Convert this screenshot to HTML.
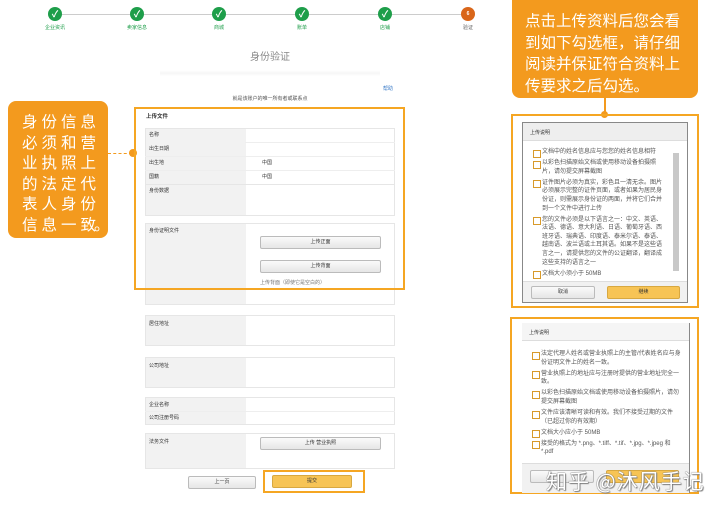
<!DOCTYPE html>
<html><head><meta charset="utf-8"><style>
*{margin:0;padding:0;box-sizing:border-box}
body{width:720px;height:512px;background:#fff;position:relative;overflow:hidden;font-family:"Liberation Sans","Noto Sans CJK SC",sans-serif;color:#333}
.a{position:absolute}
.ck{position:absolute;width:14px;height:14px;border-radius:50%;background:#1e9e4a;color:#fff;font-size:9px;line-height:14px;text-align:center;font-weight:bold}
.sl{position:absolute;font-size:5px;color:#1e9e4a;width:40px;text-align:center}
.row{position:absolute;left:145px;width:250px;border:1px solid #e6e6e6;background:linear-gradient(90deg,#f2f2f2 0,#f2f2f2 100px,#fff 100px)}
.lb{position:absolute;left:4px;font-size:5px;color:#333}
.btn{position:absolute;height:13px;border:1px solid #bbb;border-radius:2px;background:linear-gradient(#fafafa,#e6e6e6);font-size:5px;text-align:center;line-height:11px;color:#333}
.ob{position:absolute;border:2px solid #f5a623}
.it{font-size:6px;color:#555;line-height:8.6px;margin-bottom:2.5px;padding-left:9px;position:relative}
.it:before{content:"";position:absolute;left:0;top:1.5px;width:6px;height:6px;border:1px solid #d89a2a}
</style></head><body>
<div class="a" style="left:55px;top:14px;width:420px;height:1px;background:#ccc"></div>
<div class="ck" style="left:48px;top:7px">✓</div><div class="sl" style="left:35px;top:24px">企业资讯</div>
<div class="ck" style="left:130px;top:7px">✓</div><div class="sl" style="left:117px;top:24px">卖家信息</div>
<div class="ck" style="left:212px;top:7px">✓</div><div class="sl" style="left:199px;top:24px">商城</div>
<div class="ck" style="left:295px;top:7px">✓</div><div class="sl" style="left:282px;top:24px">账单</div>
<div class="ck" style="left:378px;top:7px">✓</div><div class="sl" style="left:365px;top:24px">店铺</div>
<div class="ck" style="left:461px;top:7px;background:#d9661a;font-size:5px">6</div><div class="sl" style="left:448px;top:24px;color:#666">验证</div>
<div class="a" style="left:240px;top:48px;width:60px;text-align:center;font-size:10px;color:#888">身份验证</div>
<div class="a" style="left:160px;top:70px;width:220px;height:6px;background:linear-gradient(#fff,#f6f6f6,#fff)"></div>
<div class="a" style="left:383px;top:85px;font-size:5px;color:#3a7bc8">帮助</div>
<div class="a" style="left:200px;top:95px;width:140px;text-align:center;font-size:5px;color:#555">就是该账户的唯一所有者或联系点</div>

<div class="a" style="left:8px;top:101px;width:100px;height:137px;background:#f39a1e;border-radius:8px;color:#fff;font-size:15.5px;line-height:20.5px;padding:10px 0 0 14px;letter-spacing:4px;white-space:nowrap;font-family:'Noto Sans CJK SC',sans-serif">身份信息<br>必须和营<br>业执照上<br>的法定代<br>表人身份<br>信息一致<span style="letter-spacing:0;margin-left:-6px">。</span></div>
<div class="a" style="left:108px;top:153px;width:24px;border-top:1.5px dashed #f39a1e"></div>
<div class="a" style="left:129px;top:149px;width:8px;height:8px;border-radius:50%;background:#f39a1e"></div>

<div class="a" style="left:146px;top:112px;font-size:5.5px;font-weight:bold">上传文件</div>
<div class="row" style="top:128px;height:58px"></div>
<div class="lb" style="left:149px;top:131px;position:absolute">名称</div>
<div class="a" style="left:245px;top:142px;width:150px;border-top:1px solid #eee"></div>
<div class="lb" style="left:149px;top:145px;position:absolute">出生日期</div>
<div class="a" style="left:145px;top:156px;width:250px;border-top:1px solid #eee"></div>
<div class="lb" style="left:149px;top:159px;position:absolute">出生地</div><div class="lb" style="left:262px;top:159px;position:absolute">中国</div>
<div class="a" style="left:145px;top:170px;width:250px;border-top:1px solid #eee"></div>
<div class="lb" style="left:149px;top:173px;position:absolute">国籍</div><div class="lb" style="left:262px;top:173px;position:absolute">中国</div>
<div class="a" style="left:145px;top:184px;width:250px;border-top:1px solid #eee"></div>
<div class="row" style="top:184px;height:32px"></div>
<div class="lb" style="left:149px;top:187px;position:absolute">身份数据</div>
<div class="row" style="top:223px;height:82px"></div>
<div class="lb" style="left:149px;top:227px;position:absolute">身份证明文件</div>
<div class="btn" style="left:260px;top:236px;width:121px">上传正面</div>
<div class="btn" style="left:260px;top:260px;width:121px">上传背面</div>
<div class="a" style="left:260px;top:279px;font-size:5px;color:#777">上传背面（即使它是空白的）</div>
<div class="ob" style="left:134px;top:107px;width:271px;height:183px"></div>

<div class="row" style="top:315px;height:31px"></div><div class="lb" style="left:149px;top:320px;position:absolute">居住地址</div>
<div class="row" style="top:357px;height:31px"></div><div class="lb" style="left:149px;top:362px;position:absolute">公司地址</div>
<div class="row" style="top:397px;height:28px"></div>
<div class="a" style="left:145px;top:411px;width:250px;border-top:1px solid #eee"></div>
<div class="lb" style="left:149px;top:401px;position:absolute">企业名称</div><div class="lb" style="left:149px;top:414px;position:absolute">公司注册号码</div>
<div class="row" style="top:433px;height:36px"></div><div class="lb" style="left:149px;top:438px;position:absolute">法务文件</div>
<div class="btn" style="left:260px;top:437px;width:121px">上传 营业执照</div>
<div class="btn" style="left:188px;top:476px;width:68px">上一页</div>
<div class="btn" style="left:272px;top:475px;width:80px;background:#f7c455;border-color:#d8a840">提交</div>
<div class="ob" style="left:263px;top:470px;width:102px;height:23px"></div>

<div class="a" style="left:512px;top:0;width:186px;height:98px;background:#f39a1e;border-radius:0 0 8px 8px;color:#fff;font-size:15.5px;line-height:21.5px;padding:10px 0 0 13px;white-space:nowrap;font-family:'Noto Sans CJK SC',sans-serif">点击上传资料后您会看<br>到如下勾选框，请仔细<br>阅读并保证符合资料上<br>传要求之后勾选。</div>
<div class="a" style="left:604px;top:98px;width:1.5px;height:16px;background:#f39a1e"></div>
<div class="a" style="left:601px;top:111px;width:7px;height:7px;border-radius:50%;background:#f39a1e"></div>
<div class="ob" style="left:511px;top:114px;width:188px;height:194px"></div>
<div class="a" style="left:522px;top:122px;width:166px;height:181px;border:1px solid #888;background:#fff;overflow:hidden">
<div style="height:18px;background:#eee;border-bottom:1px solid #ddd;font-size:5px;padding:6px 7px">上传说明</div>
<div style="padding:7px 20px 0 10px">
<div class="it">文档中的姓名信息应与您您的姓名信息相符</div>
<div class="it">以彩色扫描原始文档或使用移动设备拍摄照片，请勿提交屏幕截图</div>
<div class="it">证件图片必须为真实，彩色且一清无余。图片必须展示完整的证件页面，或者如果为居民身份证，则需展示身份证的两面，并将它们合并到一个文件中进行上传</div>
<div class="it">您的文件必须是以下语言之一：中文、英语、法语、德语、意大利语、日语、葡萄牙语、西班牙语、瑞典语、印度语、泰米尔语、泰语、越南语、波兰语或土耳其语。如果不是这些语言之一，请提供您的文件的公证翻译，翻译成这些支持的语言之一</div>
<div class="it">文档大小须小于 50MB</div></div>
<div class="a" style="left:150px;top:30px;width:6px;height:118px;background:#c8c8c8"></div>
<div class="a" style="left:0;top:158px;width:164px;height:22px;background:#f1f1f1;border-top:1px solid #ddd"></div>
<div class="btn" style="left:8px;top:163px;width:64px">取消</div>
<div class="btn" style="left:84px;top:163px;width:73px;background:#f7c455;border-color:#d8a840">继续</div>
</div>

<div class="ob" style="left:510px;top:317px;width:189px;height:177px"></div>
<div class="a" style="left:522px;top:323px;width:168px;height:170px;border-right:1px solid #888;background:#fff;overflow:hidden">
<div style="height:18px;border-bottom:1px solid #ddd;font-size:5px;padding:6px 7px;background:#f5f5f5">上传说明</div>
<div style="padding:9px 8px 0 10px">
<div class="it">法定代理人姓名或营业执照上的主管/代表姓名应与身份证明文件上的姓名一致。</div>
<div class="it">营业执照上的地址应与注册时提供的营业地址完全一致。</div>
<div class="it">以彩色扫描原始文档或使用移动设备拍摄照片，请勿提交屏幕截图</div>
<div class="it">文件应该清晰可读和有效。我们不接受过期的文件（已超过你的有效期）</div>
<div class="it">文档大小应小于 50MB</div>
<div class="it">接受的格式为 *.png、*.tiff、*.tif、*.jpg、*.jpeg 和 *.pdf</div></div>
<div class="a" style="left:0;top:140px;width:167px;height:30px;background:#f1f1f1;border-top:1px solid #ddd"></div>
<div class="btn" style="left:8px;top:147px;width:64px"></div>
<div class="btn" style="left:84px;top:147px;width:73px;background:#f7c455;border-color:#d8a840"></div>
</div>
<div class="a" style="left:546px;top:466px;font-size:21px;color:#fff;letter-spacing:1px;text-shadow:0 0 1px #666,0 0 1px #666,1px 1px 1px #888;font-family:'Noto Sans CJK SC',sans-serif">知乎 @沐风手记</div>
</body></html>
